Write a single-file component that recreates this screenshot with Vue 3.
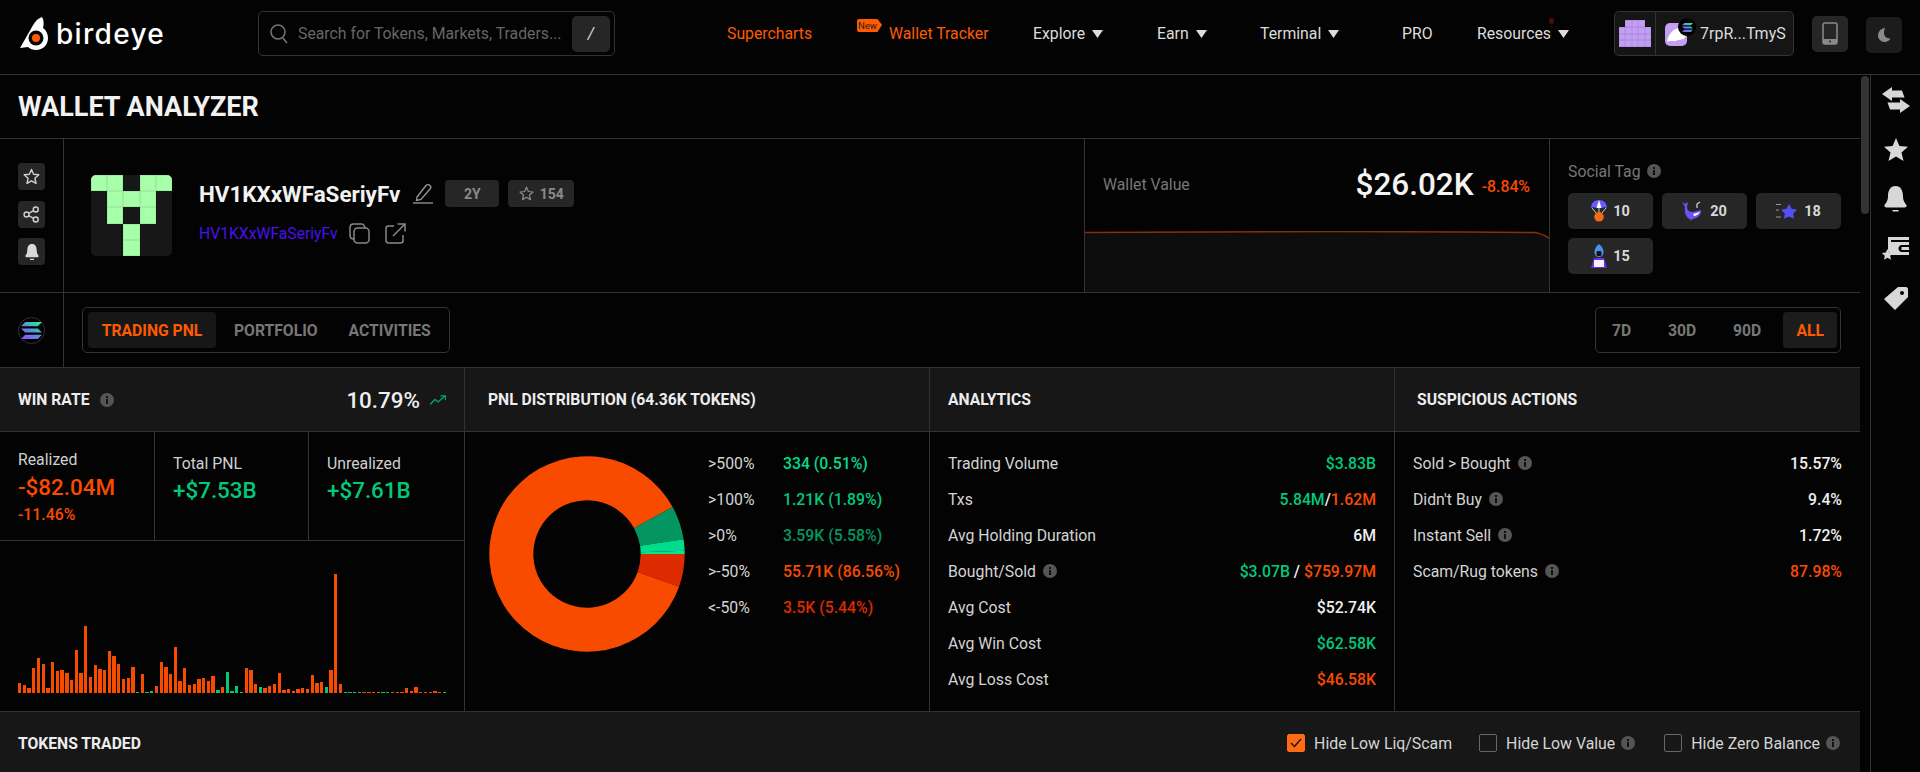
<script setup>
const navItems = [
  { label: 'Supercharts', accent: true },
  { label: 'Wallet Tracker', accent: true, isNew: true },
  { label: 'Explore', caret: true },
  { label: 'Earn', caret: true },
  { label: 'Terminal', caret: true },
  { label: 'PRO' },
  { label: 'Resources', caret: true, dot: true }
]
const avatarCells = [1,1,0,1,1, 0,1,1,1,0, 0,1,0,1,0, 0,0,1,0,0, 0,0,1,0,0]
const miniCells = [0,1,1,1,0, 1,1,1,1,1, 1,1,1,1,1, 1,1,1,1,1]

// bar heights in thirds of a pixel; negative values are the green bars
const raw = [30,25,14,75,104,88,15,94,66,69,60,38,129,60,201,48,83,73,69,126,111,86,42,45,78,-3,58,-3,-6,22,94,79,57,138,35,76,24,26,42,45,36,50,-9,18,-63,-6,-22,-4,75,69,26,-18,15,20,28,59,9,12,6,11,16,12,55,30,33,-19,68,357,28,-3,-3,-3,-3,3,3,3,3,-3,-3,3,3,3,15,6,18,3,3,3,6,3,-3]
const bars = raw.map(v => ({ h: Math.abs(v) / 3, green: v < 0 }))

const slices = [
  { pct: 5.44, color: '#dd2a00' },
  { pct: 86.56, color: '#f84b00' },
  { pct: 5.58, color: '#049660' },
  { pct: 1.89, color: '#00dc8c' },
  { pct: 0.53, color: '#00e693' }
]
function arc(a0, a1, R, r) {
  const p = (rad, a) => `${(98 + rad * Math.cos(a)).toFixed(2)} ${(98 + rad * Math.sin(a)).toFixed(2)}`
  const large = a1 - a0 > Math.PI ? 1 : 0
  return `M${p(R, a0)}A${R} ${R} 0 ${large} 1 ${p(R, a1)}L${p(r, a1)}A${r} ${r} 0 ${large} 0 ${p(r, a0)}Z`
}
let acc = 0
const donut = slices.map(s => {
  const a0 = acc / 100 * Math.PI * 2
  acc += s.pct
  return { d: arc(a0, acc / 100 * Math.PI * 2, 97.7, 53.7), color: s.color }
})

const legend = [
  { k: '>500%', v: '334 (0.51%)', c: 'c-g1' },
  { k: '>100%', v: '1.21K (1.89%)', c: 'c-g2' },
  { k: '>0%', v: '3.59K (5.58%)', c: 'c-g3' },
  { k: '>-50%', v: '55.71K (86.56%)', c: 'c-r1' },
  { k: '<-50%', v: '3.5K (5.44%)', c: 'c-r2' }
]
const analytics = [
  { k: 'Trading Volume', v: '$3.83B', c: 'c-g' },
  { k: 'Txs', parts: [['5.84M', 'c-g'], ['/', 'c-w'], ['1.62M', 'c-r1']] },
  { k: 'Avg Holding Duration', v: '6M', c: 'c-w' },
  { k: 'Bought/Sold', info: true, parts: [['$3.07B', 'c-g'], [' / ', 'c-w'], ['$759.97M', 'c-r1']] },
  { k: 'Avg Cost', v: '$52.74K', c: 'c-w' },
  { k: 'Avg Win Cost', v: '$62.58K', c: 'c-g' },
  { k: 'Avg Loss Cost', v: '$46.58K', c: 'c-r1' }
]
const suspicious = [
  { k: 'Sold > Bought', v: '15.57%', c: 'c-w' },
  { k: "Didn't Buy", v: '9.4%', c: 'c-w' },
  { k: 'Instant Sell', v: '1.72%', c: 'c-w' },
  { k: 'Scam/Rug tokens', v: '87.98%', c: 'c-r1' }
]
</script>

<template>
  <div class="page">
    <svg class="defs" width="0" height="0">
      <defs>
        <linearGradient id="sol" x1="0" y1="1" x2="1" y2="0">
          <stop offset="0" stop-color="#9945ff" />
          <stop offset="0.5" stop-color="#5f8fd8" />
          <stop offset="1" stop-color="#19fb9b" />
        </linearGradient>
        <symbol id="info" viewBox="0 0 14 14">
          <circle cx="7" cy="7" r="7" fill="#555" />
          <rect x="6" y="6" width="2" height="5" fill="#111" />
          <rect x="6" y="3" width="2" height="2" fill="#111" />
        </symbol>
        <symbol id="solana" viewBox="0 0 20 16">
          <path fill="url(#sol)" d="M4 0H20L16 4H0ZM0 6H16L20 10H4ZM4 12H20L16 16H0Z" />
        </symbol>
      </defs>
    </svg>

    <header class="topbar">
      <div class="logo">
        <svg class="logo-mark" width="30" height="36" viewBox="0 0 30 36">
          <path fill="#fff" d="M23 1C17 3 15 8 13 11L1 32L9 31C11 33 14 34 17 34C24 34 29 29 29 22C29 18 27 14 24 12C25 8 25 4 23 1Z" />
          <circle cx="17" cy="22" r="7.5" fill="#050505" />
          <circle cx="17" cy="22" r="4" fill="#ff5a00" />
        </svg>
        <span class="logo-text">birdeye</span>
      </div>
      <div class="search">
        <svg width="20" height="22" viewBox="0 0 20 22" fill="none" stroke="#777" stroke-width="1.5">
          <circle cx="9" cy="9" r="7" />
          <path d="M14 15l4 5" />
        </svg>
        <span class="search-text">Search for Tokens, Markets, Traders...</span>
        <span class="slash">/</span>
      </div>
      <nav class="nav">
        <a v-for="n in navItems" :key="n.label" class="nav-item" :class="{ accent: n.accent }">
          <span v-if="n.isNew" class="new-badge">New</span>
          <span class="nav-label">{{ n.label }}<i v-if="n.dot" class="dot"></i></span>
          <svg v-if="n.caret" width="11" height="8" viewBox="0 0 11 8"><path d="M0 0H11L5.5 8Z" fill="#ddd" /></svg>
        </a>
      </nav>
      <div class="account">
        <div class="mini-cell">
          <div class="mini-grid">
            <i v-for="(c, i) in miniCells" :key="i" :class="{ on: c }"></i>
          </div>
        </div>
        <div class="account-main">
          <div class="phantom">
            <svg width="22" height="23" viewBox="0 0 22 23">
              <rect width="22" height="23" rx="5" fill="#c39ff4" />
              <path fill="#fff" d="M2 19C3 12 8 5 15 5C14 8 17 9 20 11C21 14 19 17 17 16C15 18 13 16 11 18C8 19 6 17 2 19Z" />
            </svg>
            <span class="sol-badge"><svg width="11" height="11" viewBox="0 0 20 16"><use href="#solana" /></svg></span>
          </div>
          <span class="account-name">7rpR...TmyS</span>
        </div>
      </div>
      <button class="square phone">
        <svg width="16" height="23" viewBox="0 0 16 23">
          <rect x="1" y="1" width="14" height="21" rx="2" fill="none" stroke="#8a8a8a" stroke-width="1.5" />
          <rect x="1" y="17" width="14" height="5" fill="#8a8a8a" />
          <circle cx="8" cy="19.5" r="1" fill="#222" />
        </svg>
      </button>
      <button class="square moon">
        <svg width="14" height="14" viewBox="0 0 14 14"><path fill="#8a8a8a" d="M8 0C4 .5 1 3.5 1 7.5C1 11 4 14 7.5 14C10 14 12.500 12.500 13.500 10.500C9 11 5 7 8 0Z" /></svg>
      </button>
    </header>

    <div class="body">
      <main class="main">
        <div class="title-row"><h1>WALLET ANALYZER</h1></div>

        <section class="wallet-row">
          <div class="side-actions">
            <span class="act">
              <svg width="17" height="17" viewBox="0 0 24 24" fill="none" stroke="#cfcfcf" stroke-width="2" stroke-linejoin="round"><path d="M12 2l3 6.800 7.300.8-5.500 4.900 1.600 7.300L12 18.100 5.600 21.800l1.600-7.300L1.700 9.600 9 8.800z" /></svg>
            </span>
            <span class="act">
              <svg width="17" height="17" viewBox="0 0 24 24" fill="none" stroke="#cfcfcf" stroke-width="2"><circle cx="5" cy="12" r="3.500" /><circle cx="18" cy="5" r="3.500" /><circle cx="18" cy="19" r="3.500" /><path d="M8 10.500l7-4M8 13.500l7 4" /></svg>
            </span>
            <span class="act">
              <svg width="16" height="18" viewBox="0 0 24 26"><path fill="#d8d8d8" d="M12 1C7 1 5 5 5 10C5 15 3 17 2 19C2 20 3 21 4 21H20C21 21 22 20 22 19C21 17 19 15 19 10C19 5 17 1 12 1ZM9 23H15V25H9Z" /></svg>
            </span>
          </div>
          <div class="identity">
            <div class="avatar">
              <i v-for="(c, i) in avatarCells" :key="i" :class="{ on: c }"></i>
            </div>
            <div class="who">
              <div class="who-top">
                <span class="wname">HV1KXxWFaSeriyFv</span>
                <svg width="20" height="21" viewBox="0 0 20 21" fill="none" stroke="#999" stroke-width="1.300"><path d="M4 14L13 2.500C14 1.500 16 1.500 17 2.500C18 3.500 18 5 17 6L8 16.500L3.500 17.500Z" /><path d="M0 20H20" /></svg>
                <span class="chip">2Y</span>
                <span class="chip star">
                  <svg width="15" height="15" viewBox="0 0 24 24" fill="none" stroke="#8a8a8a" stroke-width="2" stroke-linejoin="round"><path d="M12 2l3 6.800 7.300.8-5.500 4.900 1.600 7.300L12 18.100 5.600 21.800l1.600-7.300L1.700 9.600 9 8.800z" /></svg>
                  154
                </span>
              </div>
              <div class="who-bottom">
                <span class="waddr">HV1KXxWFaSeriyFv</span>
                <svg width="21" height="21" viewBox="0 0 21 21" fill="none" stroke="#888" stroke-width="1.500"><rect x="5" y="5" width="15" height="15" rx="3.500" /><path d="M5 16C2.500 16 1 14.500 1 12.500V4.500C1 2.500 2.500 1 4.500 1H12.500C14.500 1 15.500 2.500 16 5" /></svg>
                <svg class="open" width="21" height="21" viewBox="0 0 21 21" fill="none" stroke="#888" stroke-width="1.500"><path d="M9 3H3.500C2 3 1 4 1 5.500V17.500C1 19 2 20 3.500 20H15.500C17 20 18 19 18 17.500V12" /><path d="M8 13L20 1M12.500 1H20V8.500" /></svg>
              </div>
            </div>
          </div>
          <div class="value">
            <div class="value-head">
              <span class="value-label">Wallet Value</span>
              <span class="value-num">$26.02K</span>
              <span class="value-pct">-8.84%</span>
            </div>
            <svg class="value-chart" width="465" height="61" viewBox="0 0 465 61" preserveAspectRatio="none">
              <path fill="#0d0d0d" d="M0 1.500L120 1 250 0.500 380 1 450 1.500 465 7V61H0Z" />
              <path fill="none" stroke="#8a3005" stroke-width="1.500" d="M0 1.500L120 1 250 0.500 380 1 450 1.500C456 2 460 4 465 7" />
            </svg>
          </div>
          <div class="social">
            <div class="social-head">
              <span>Social Tag</span>
              <svg width="14" height="14"><use href="#info" /></svg>
            </div>
            <div class="social-grid">
              <span class="tag">
                <svg width="16" height="22" viewBox="0 0 16 22">
                  <path fill="#6a5cff" d="M0 8C0 3 3.500 0 8 0S16 3 16 8C14 7 12 7 11 8C10 7 6 7 5 8C4 7 2 7 0 8Z" />
                  <path fill="#fff" d="M8 0L10.500 8H5.500Z" />
                  <path stroke="#ddd" stroke-width=".9" fill="none" d="M1 8L6 14M15 8L10 14M8 8V13" />
                  <circle cx="8" cy="16.800" r="4.800" fill="#f26a12" />
                </svg>
                10
              </span>
              <span class="tag">
                <svg width="22" height="20" viewBox="0 0 22 20">
                  <path fill="#6a55f0" d="M0 1L3 3 6 1 5 6C5 10 8 11 11 11L19 9C20 14 14 18 10 18L9 20 8 18C4 17 2 11 3 6Z" />
                  <path fill="#fff" d="M11 13L18 11C17 13 14 15 12 15Z" />
                  <path stroke="#ccc" stroke-width="1.300" fill="none" d="M15 7V3L18 1" />
                </svg>
                20
              </span>
              <span class="tag">
                <svg width="22" height="16" viewBox="0 0 22 16">
                  <path fill="#5550f5" d="M13 1l2.600 4.700 5.400 1-3.800 3.800.8 5.300L13 13.500 8 15.800l.8-5.300L5 6.700l5.400-1z" />
                  <path stroke="#999" stroke-width="1" d="M0 1.500H5M0 7H3M0 14H5" />
                </svg>
                18
              </span>
              <span class="tag">
                <svg width="16" height="24" viewBox="0 0 16 24">
                  <path fill="#4a90ee" d="M8 0C5 2 3.500 5 3.500 8C3.500 11 5 13 8 13S12.500 11 12.500 8C12.500 5 11 2 8 0Z" />
                  <rect x="5.500" y="7" width="5" height="5" rx="1.500" fill="#111" />
                  <path fill="#6a2fe0" d="M0 24L3 14H13L16 24Z" />
                  <rect x="3" y="16" width="10" height="7" fill="#f4f0ff" />
                </svg>
                15
              </span>
            </div>
          </div>
        </section>

        <section class="tabs-row">
          <div class="chain">
            <span class="chain-ic"><svg width="21" height="17" viewBox="0 0 20 16"><use href="#solana" /></svg></span>
          </div>
          <div class="tabs-wrap">
            <div class="seg">
              <span class="seg-item active tab">TRADING PNL</span>
              <span class="seg-item tab">PORTFOLIO</span>
              <span class="seg-item tab">ACTIVITIES</span>
            </div>
            <div class="seg times">
              <span class="seg-item t">7D</span>
              <span class="seg-item t">30D</span>
              <span class="seg-item t">90D</span>
              <span class="seg-item t active">ALL</span>
            </div>
          </div>
        </section>

        <section class="panels">
          <div class="panel">
            <div class="panel-head win">
              <span class="ph-title">WIN RATE</span>
              <svg class="ph-info" width="14" height="14"><use href="#info" /></svg>
              <span class="win-num">10.79%</span>
              <svg width="16" height="10" viewBox="0 0 16 10" fill="none" stroke="#0aa56b" stroke-width="1.300"><path d="M0 9.500L5 4.500 8 7 15 1M10.500 .8H15.500V5" /></svg>
            </div>
            <div class="stats">
              <div class="stat first">
                <div class="s-k">Realized</div>
                <div class="s-v c-r1">-$82.04M</div>
                <div class="s-p c-r1">-11.46%</div>
              </div>
              <div class="stat">
                <div class="s-k">Total PNL</div>
                <div class="s-v c-g">+$7.53B</div>
              </div>
              <div class="stat">
                <div class="s-k">Unrealized</div>
                <div class="s-v c-g">+$7.61B</div>
              </div>
            </div>
            <div class="bars">
              <i v-for="(b, i) in bars" :key="i" :class="{ green: b.green }" :style="{ height: b.h + 'px' }"></i>
            </div>
          </div>

          <div class="panel">
            <div class="panel-head dist"><span class="ph-title">PNL DISTRIBUTION (64.36K TOKENS)</span></div>
            <div class="dist-body">
              <svg class="donut" width="196" height="196" viewBox="0 0 196 196">
                <path v-for="(s, i) in donut" :key="i" :d="s.d" :fill="s.color" />
              </svg>
              <div class="legend">
                <div v-for="l in legend" :key="l.k" class="leg-row">
                  <span class="leg-k">{{ l.k }}</span>
                  <span class="leg-v" :class="l.c">{{ l.v }}</span>
                </div>
              </div>
            </div>
          </div>

          <div class="panel">
            <div class="panel-head"><span class="ph-title">ANALYTICS</span></div>
            <div class="rows">
              <div v-for="r in analytics" :key="r.k" class="row">
                <span class="r-k">{{ r.k }}<svg v-if="r.info" width="14" height="14"><use href="#info" /></svg></span>
                <span class="r-v" :class="r.c">
                  <template v-if="r.v">{{ r.v }}</template>
                  <template v-else><span v-for="(p, i) in r.parts" :key="i" :class="p[1]">{{ p[0] }}</span></template>
                </span>
              </div>
            </div>
          </div>

          <div class="panel last">
            <div class="panel-head sus"><span class="ph-title">SUSPICIOUS ACTIONS</span></div>
            <div class="rows">
              <div v-for="r in suspicious" :key="r.k" class="row">
                <span class="r-k">{{ r.k }}<svg width="14" height="14"><use href="#info" /></svg></span>
                <span class="r-v" :class="r.c">{{ r.v }}</span>
              </div>
            </div>
          </div>
        </section>

        <section class="tokens-row">
          <span class="ph-title">TOKENS TRADED</span>
          <div class="checks">
            <label class="check one"><span class="box checked"><svg width="12" height="10" viewBox="0 0 12 10" fill="none" stroke="#111" stroke-width="1.300"><path d="M1 5L4.500 8.500 11 1" /></svg></span>Hide Low Liq/Scam</label>
            <label class="check two"><span class="box"></span>Hide Low Value<svg width="14" height="14"><use href="#info" /></svg></label>
            <label class="check three"><span class="box"></span>Hide Zero Balance<svg width="14" height="14"><use href="#info" /></svg></label>
          </div>
        </section>
      </main>

      <div class="gutter"><div class="thumb"></div></div>

      <aside class="rail">
        <svg width="28" height="26" viewBox="0 0 28 26"><path fill="#d8d8d8" d="M0 7L10 0V3.500H20L22.500 10.500H10V14ZM28 19L18 26V22.500H8L5.500 15.500H18V12Z" /></svg>
        <svg width="24" height="23" viewBox="0 0 24 23"><path fill="#d8d8d8" d="M12 0l3.400 8 8.600.8-6.500 5.600 2 8.500L12 18.500 4.500 22.900l2-8.500L0 8.800 8.600 8z" /></svg>
        <svg width="23" height="26" viewBox="0 0 23 26"><path fill="#d8d8d8" d="M11.500 0C6 0 4 5 4 10C4 15 2 17 .5 19C0 20.500 1 21.500 2.500 21.500H20.500C22 21.500 23 20.500 22.500 19C21 17 19 15 19 10C19 5 17 0 11.500 0ZM8.500 24H14.500V25.500H8.500Z" /></svg>
        <svg width="27" height="24" viewBox="0 0 27 24"><path fill="#d8d8d8" d="M6 0H27V3H9V5H27V8H20C17.500 8 16.500 10 16.500 11.500S17.500 15 20 15H27V18H9V17L6 14ZM19.500 10H27V13H19.500Z" /><path fill="#d8d8d8" d="M5.500 12l1.700 3.600 4 .5-3 2.700.8 4-3.500-2-3.500 2 .8-4-3-2.700 4-.5z" /></svg>
        <svg width="24" height="24" viewBox="0 0 24 24"><path fill="#d8d8d8" fill-rule="evenodd" d="M14 1H22C23 1 24 2 24 3V11L11 24 0 13ZM18 5A2 2 0 1 0 18 9 2 2 0 1 0 18 5Z" /></svg>
      </aside>
    </div>
  </div>
</template>

<style>
html, body { margin: 0; background: #030303; overflow: hidden; }
</style>

<style scoped>
.page { width: 1920px; height: 772px; overflow: hidden; background: #030303; color: #e4e4e4; font-family: Roboto, "Liberation Sans", sans-serif; font-size: 15.800px; display: flex; flex-direction: column; }
.defs { position: absolute; }
i { display: block; font-style: normal; }
.topbar { height: 75px; flex: none; box-sizing: border-box; border-bottom: 1px solid #333; display: flex; align-items: center; padding-bottom: 7px; }
.logo { width: 258px; flex: none; display: flex; align-items: center; padding-left: 19px; box-sizing: border-box; }
.logo-text { font-family: Inter, sans-serif; font-weight: 500; font-size: 28px; letter-spacing: 1.300px; color: #fff; margin-left: 7px; line-height: 1; }
.search { width: 357px; height: 45px; flex: none; box-sizing: border-box; border: 1px solid #333; border-radius: 5px; display: flex; align-items: center; padding: 0 4px 0 10px; }
.search-text { color: #666; font-size: 15.800px; margin-left: 9px; flex: 1; white-space: nowrap; }
.slash { width: 38px; height: 36px; background: #262626; border-radius: 5px; display: flex; align-items: center; justify-content: center; color: #ddd; font-style: italic; }
.nav { margin-left: 112px; width: 887px; flex: none; display: grid; grid-template-columns: 130px 176px 124px 103px 142px 75px auto; align-items: center; }
.nav-item { display: flex; align-items: center; gap: 7px; color: #dcdcdc; font-size: 15.800px; white-space: nowrap; position: relative; }
.nav-item.accent { color: #ff5a00; }
.nav-label { position: relative; }
.new-badge { background: #ff5a00; color: #222; font-size: 9.500px; line-height: 13px; height: 13px; width: 25px; box-sizing: border-box; padding-right: 4px; text-align: center; align-self: flex-start; margin-top: -5px; clip-path: polygon(0 0, 82% 0, 100% 45%, 82% 100%, 0 100%); border-radius: 2px; }
.dot { position: absolute; right: -3px; top: -6px; width: 5px; height: 6px; border-radius: 50%; background: #4a1205; }
.account { width: 180px; height: 45px; flex: none; box-sizing: border-box; background: #151515; border: 1px solid #333; border-radius: 5px; display: flex; }
.mini-cell { width: 40px; flex: none; border-right: 1px solid #333; display: flex; align-items: center; justify-content: center; }
.mini-grid { display: grid; grid-template-columns: repeat(5, 6.600px); grid-auto-rows: 6.700px; gap: 0; }
.mini-grid i.on { background: #c39ff4; box-shadow: inset 0 0 0 .4px #a884dc; }
.account-main { display: flex; align-items: center; flex: 1; padding-left: 9px; }
.phantom { position: relative; width: 22px; height: 23px; margin-top: 2px; }
.phantom > svg { display: block; }
.sol-badge { position: absolute; left: 13px; top: -5px; width: 18px; height: 18px; border-radius: 50%; background: #000; display: flex; align-items: center; justify-content: center; }
.account-name { color: #dcdcdc; font-size: 16px; margin-left: 13px; white-space: nowrap; }
.square { width: 36px; height: 36px; padding: 0; border: 0; background: #262626; border-radius: 5px; display: flex; align-items: center; justify-content: center; flex: none; }
.phone { margin-left: 18px; }
.moon { margin-left: 18px; background: #1c1c1c; margin-top: 2px; }

.body { flex: 1; display: flex; min-height: 0; }
.main { width: 1860px; flex: none; display: flex; flex-direction: column; }
.title-row { height: 64px; box-sizing: border-box; border-bottom: 1px solid #333; display: flex; align-items: center; padding: 2px 0 0 18px; flex: none; }
h1 { margin: 0; font-size: 27px; font-weight: 700; color: #f2f2f2; line-height: 1; }

.wallet-row { height: 154px; flex: none; box-sizing: border-box; border-bottom: 1px solid #333; display: flex; }
.side-actions { width: 64px; flex: none; box-sizing: border-box; border-right: 1px solid #333; display: flex; flex-direction: column; padding: 24px 0 0 18px; gap: 10.500px; }
.act { width: 27px; height: 27px; background: #262626; border-radius: 4px; display: flex; align-items: center; justify-content: center; }
.identity { width: 1020px; flex: none; display: flex; align-items: center; box-sizing: border-box; padding-left: 27px; }
.avatar { width: 81px; height: 81px; border-radius: 5px; overflow: hidden; background: #171717; display: grid; grid-template-columns: repeat(5, 1fr); grid-template-rows: repeat(5, 1fr); }
.avatar i.on { background: #a8ffaa; box-shadow: inset 0 0 0 .5px #8fe092; }
.who { margin-left: 27px; display: flex; flex-direction: column; gap: 15.500px; margin-top: -7px; }
.who-top, .who-bottom { display: flex; align-items: center; }
.wname { font-size: 22.400px; font-weight: 700; color: #f2f2f2; margin-right: 13px; }
.chip { height: 27px; min-width: 54px; box-sizing: border-box; background: #262626; border-radius: 4px; color: #8a8a8a; font-weight: 700; font-size: 14px; display: flex; align-items: center; justify-content: center; gap: 6px; margin-left: 12px; }
.chip.star { margin-left: 9px; width: 66px; }
.waddr { color: #4a10f0; font-size: 15.700px; margin-right: 11px; }
.open { margin-left: 15px; }
.value { width: 466px; flex: none; box-sizing: border-box; border-left: 1px solid #333; border-right: 1px solid #333; display: flex; flex-direction: column; justify-content: space-between; }
.value-head { display: flex; align-items: center; height: 91px; padding: 0 19px 0 18px; }
.value-label { color: #777; font-size: 15.800px; flex: 1; }
.value-num { font-size: 31.500px; font-weight: 500; color: #f4f4f4; }
.value-pct { color: #f84b00; font-size: 15.800px; font-weight: 500; margin-left: 8px; margin-top: 4px; }
.value-chart { display: block; width: 100%; }
.social { flex: 1; padding: 23px 0 0 18px; }
.social-head { display: flex; align-items: center; gap: 6px; color: #777; font-size: 15.800px; height: 18px; }
.social-grid { display: grid; grid-template-columns: repeat(3, 85px); grid-auto-rows: 36px; gap: 9px; margin-top: 13px; }
.tag { background: #262626; border-radius: 5px; display: flex; align-items: center; justify-content: center; gap: 6px; font-weight: 700; font-size: 14.500px; color: #d8d8d8; }

.tabs-row { height: 75px; flex: none; box-sizing: border-box; border-bottom: 1px solid #333; display: flex; }
.chain { width: 64px; flex: none; box-sizing: border-box; border-right: 1px solid #333; display: flex; align-items: center; padding-left: 18px; }
.chain-ic { width: 27px; height: 27px; box-sizing: border-box; border-radius: 50%; background: #000; border: 1px solid #333; display: flex; align-items: center; justify-content: center; }
.tabs-wrap { flex: 1; display: flex; align-items: center; justify-content: space-between; padding: 0 19px 0 18px; }
.seg { display: flex; align-items: center; height: 46px; box-sizing: border-box; border: 1px solid #333; border-radius: 5px; padding: 0 3px 0 5px; }
.seg-item { height: 36px; display: flex; align-items: center; justify-content: center; font-weight: 700; font-size: 15.700px; color: #777; border-radius: 4px; white-space: nowrap; }
.seg-item.active { background: #171717; color: #ff5a00; }
.tab { padding: 0 15.500px; }
.tab.active { padding: 0; width: 128px; margin-right: 2.500px; }
.times { width: 246px; justify-content: flex-end; }
.t { padding: 0 18.400px; }
.t.active { background: #1c1c1c; padding: 0 13px; margin-left: 4px; }
.panels { height: 344px; flex: none; display: grid; grid-template-columns: repeat(4, 465px); box-sizing: border-box; border-bottom: 1px solid #333; }
.panel { box-sizing: border-box; border-right: 1px solid #333; display: flex; flex-direction: column; min-width: 0; }
.panel.last { border-right: 0; }
.panel-head { height: 64px; flex: none; box-sizing: border-box; background: #171717; border-bottom: 1px solid #333; display: flex; align-items: center; padding: 0 18px; }
.ph-title { font-weight: 700; font-size: 15.700px; color: #ededed; white-space: nowrap; }
.ph-info { margin-left: 11px; }
.win-num { margin-left: auto; font-size: 22.400px; font-weight: 500; color: #efefef; margin-right: 10px; }
.win { padding-right: 18px; }
.dist { padding-left: 23px; }
.sus { padding-left: 22px; }
.stats { display: grid; grid-template-columns: 155px 154px 155px; height: 109px; flex: none; box-sizing: border-box; border-bottom: 1px solid #333; }
.stat { box-sizing: border-box; border-right: 1px solid #333; padding: 22px 0 0 18px; }
.stat:last-child { border-right: 0; }
.stat.first { padding-top: 18px; }
.s-k { font-size: 15.800px; color: #d0d0d0; line-height: 20px; }
.s-v { font-size: 22.400px; font-weight: 500; line-height: 28px; margin-top: 2px; }
.first .s-v { margin-top: 3px; }
.s-p { font-size: 15.800px; font-weight: 500; line-height: 20px; margin-top: 4px; }
.bars { flex: 1; display: flex; align-items: flex-end; gap: 1.400px; padding: 0 18px 18px; }
.bars i { flex: 1; background: #f84b00; min-width: 0; }
.bars i.green { background: #00c97a; }
.dist-body { flex: 1; display: flex; padding-left: 24px; }
.donut { margin-top: 24px; flex: none; }
.legend { margin: 13px 0 0 23px; }
.leg-row { height: 36px; display: flex; align-items: center; font-size: 15.800px; }
.leg-k { width: 75px; color: #d4d4d4; }
.leg-v { font-weight: 500; white-space: nowrap; }
.rows { flex: 1; padding: 13px 18px 0; }
.row { height: 36px; display: flex; align-items: center; justify-content: space-between; font-size: 15.800px; }
.r-k { display: flex; align-items: center; gap: 7px; color: #d4d4d4; }
.r-v { font-weight: 500; white-space: pre; }
.c-g { color: #00c97a; }
.c-w { color: #f0f0f0; }
.c-g1 { color: #00dc8c; }
.c-g2 { color: #00c97a; }
.c-g3 { color: #049660; }
.c-r1 { color: #f84b00; }
.c-r2 { color: #dd2a00; }
.tokens-row { flex: 1; background: #171717; display: flex; align-items: center; padding: 2px 20px 0 18px; box-sizing: border-box; justify-content: space-between; }
.checks { display: flex; align-items: center; }
.check { display: flex; align-items: center; color: #d4d4d4; font-size: 15.850px; white-space: nowrap; }
.check svg { margin-left: 6px; }
.box { width: 18px; height: 18px; box-sizing: border-box; border: 1px solid #666; border-radius: 2px; margin-right: 9px; display: flex; align-items: center; justify-content: center; }
.box svg { margin-left: 0; }
.box.checked { background: #ff6a13; border-color: #ff6a13; }
.two { margin-left: 27px; }
.three { margin-left: 29px; }
.gutter { width: 10px; flex: none; position: relative; }
.thumb { position: absolute; left: 1px; top: 1px; width: 8px; height: 138px; background: #333; border-radius: 4px; }
.rail { flex: 1; box-sizing: border-box; border-left: 1px solid #333; display: flex; flex-direction: column; align-items: center; gap: 25px; padding-top: 12px; }
</style>
